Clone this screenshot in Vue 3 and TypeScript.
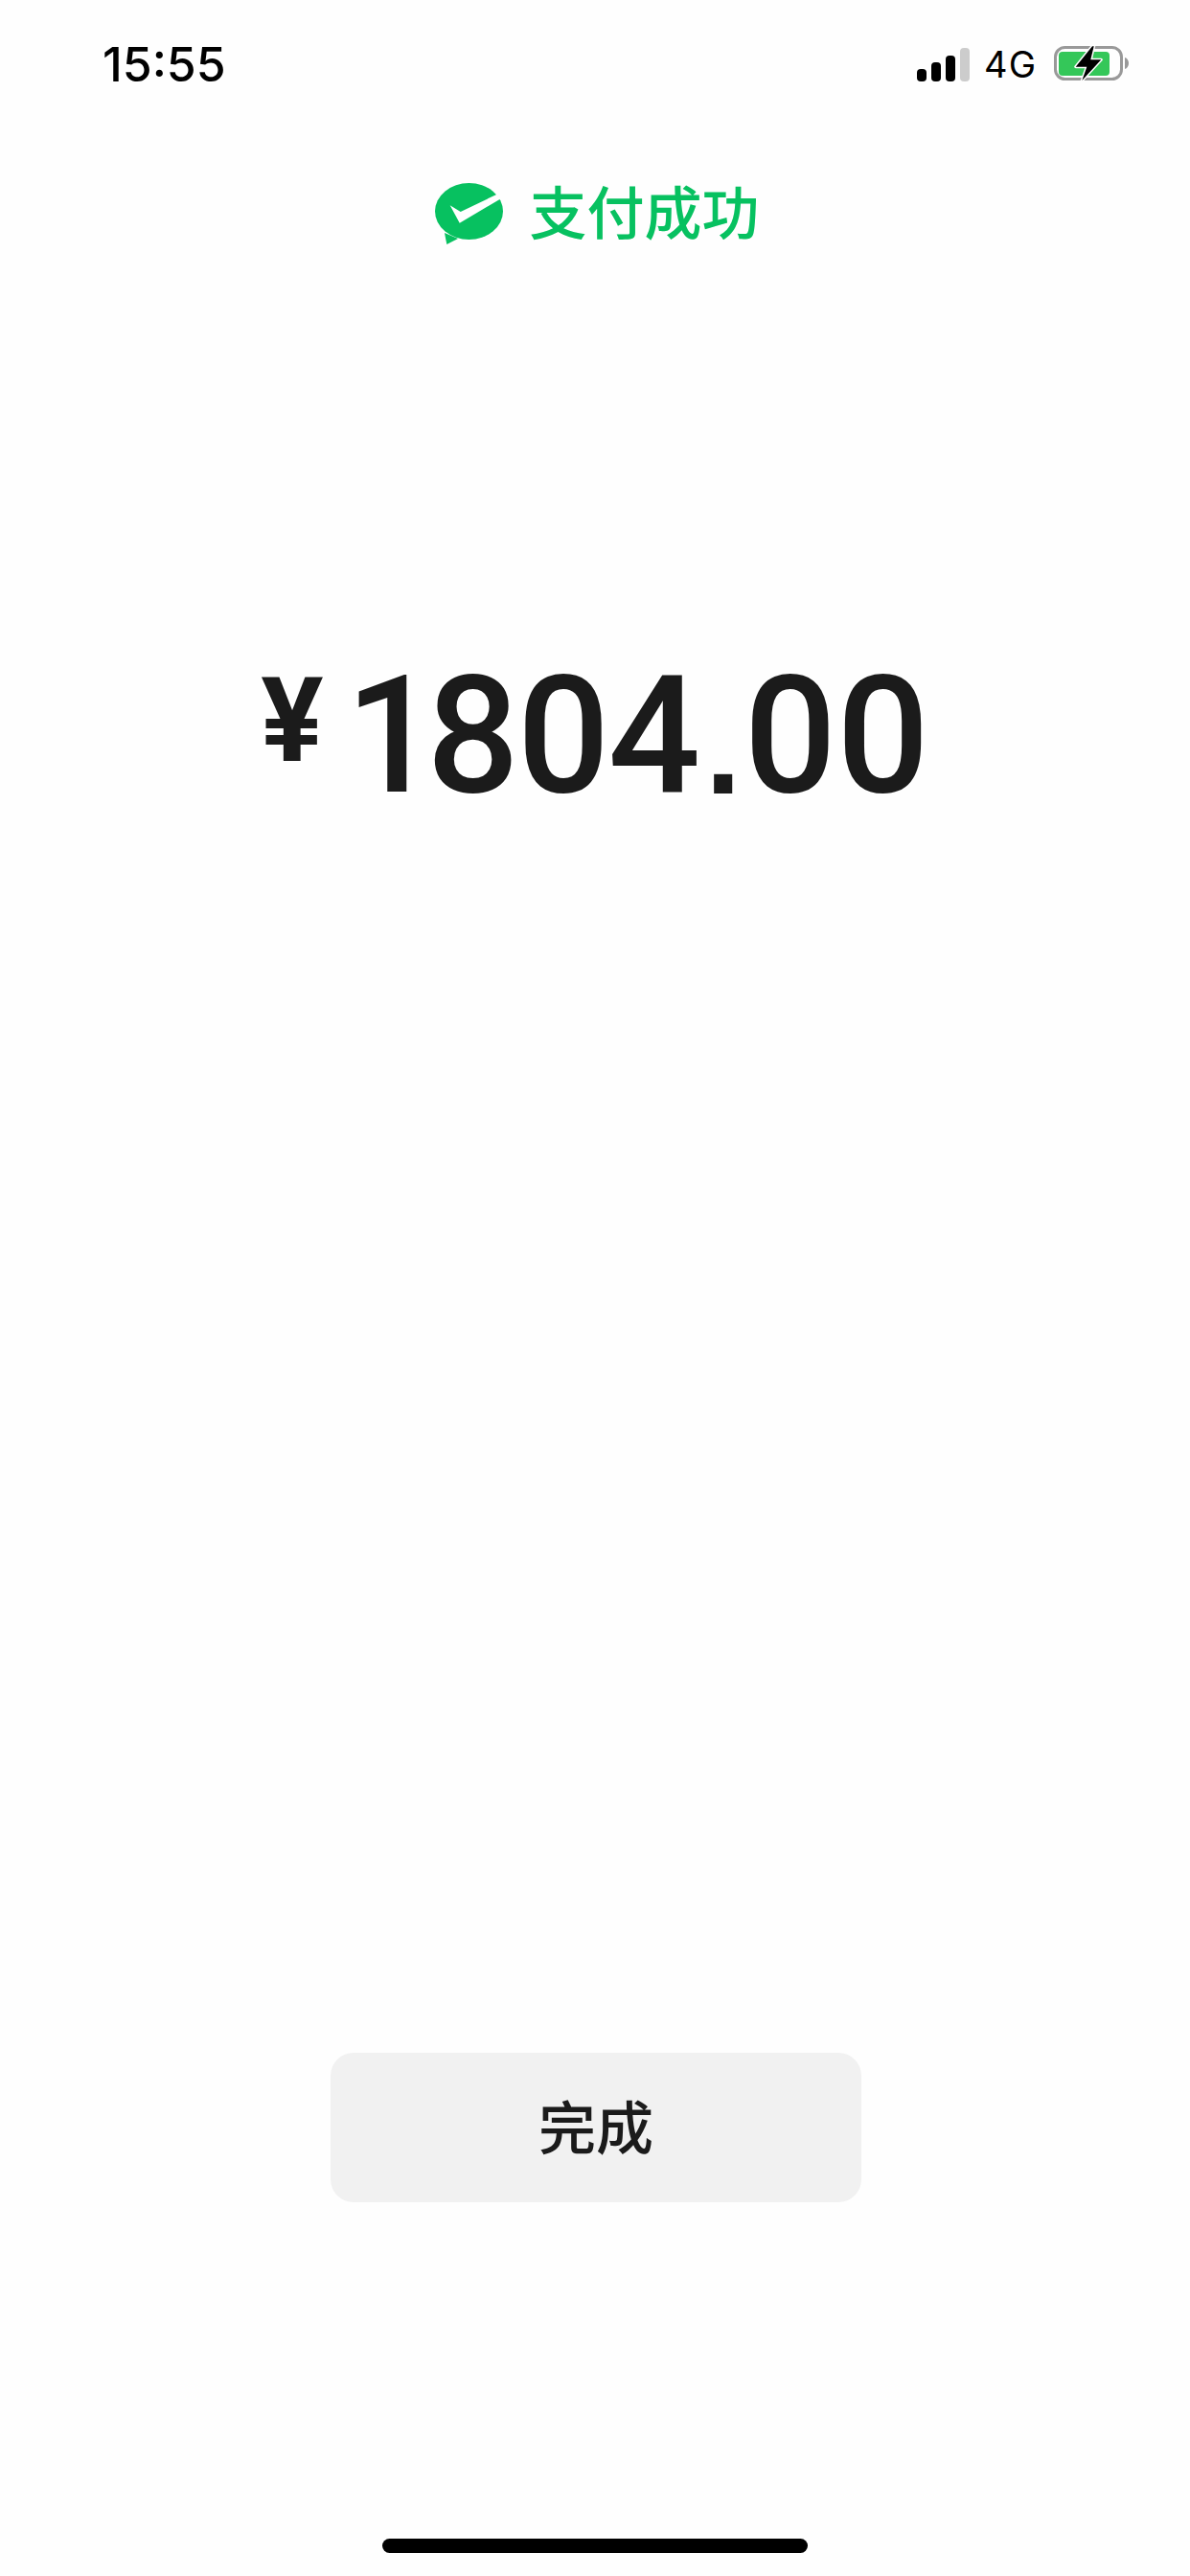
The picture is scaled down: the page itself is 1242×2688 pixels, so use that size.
<script setup lang="ts">
const lead = '1'
const whole = '804'
const cents = '00'
</script>

<template>
  <main class="page">
    <header class="status-bar">
      <span class="time">15:55</span>
      <div class="status-icons">
        <svg class="signal" width="55" height="35" viewBox="0 0 55 35">
          <rect x="0" y="22" width="10" height="13" rx="4" fill="#000" />
          <rect x="15" y="15" width="10" height="20" rx="4" fill="#000" />
          <rect x="30" y="8" width="10" height="27" rx="4" fill="#000" />
          <rect x="45" y="0" width="10" height="35" rx="4" fill="#ccc" />
        </svg>
        <span class="network">4G</span>
        <svg class="battery" width="78" height="40" viewBox="0 0 78 40">
          <rect x="1.500" y="2.500" width="69" height="33" rx="10" fill="none" stroke="#999" stroke-width="3" />
          <rect x="5" y="7" width="53" height="25" rx="4" fill="#34c759" />
          <path d="M74 13c2.500.8 4 3 4 6s-1.500 5.200-4 6z" fill="#999" />
          <path
            d="M40 1.300L22.700 22.700H34.300L29.300 37L49.300 15.300H38.300L41.700 1.300Z"
            fill="#000"
            stroke="#fff"
            stroke-width="3"
            stroke-linejoin="round"
            paint-order="stroke"
          />
        </svg>
      </div>
    </header>

    <div class="result">
      <svg class="logo" width="71" height="64" viewBox="0 0 71 64">
        <ellipse cx="35.500" cy="29.500" rx="35.500" ry="29.500" fill="#07c160" />
        <path d="M10 52L12.300 64L24 58Z" fill="#07c160" />
        <path d="M15.700 23.300L26.700 30L64.700 11.700L68 16.700L25.700 41.700Z" fill="#fff" />
      </svg>
      <span class="result-text">支付成功</span>
    </div>

    <div class="amount">
      <span class="currency">¥</span>
      <span class="value lead">{{ lead }}</span>
      <span class="value tight">{{ whole }}</span>
      <span class="dot">.</span>
      <span class="value">{{ cents }}</span>
    </div>

    <button class="done" type="button">
      <span class="done-label">完成</span>
    </button>

    <div class="home-indicator"></div>
  </main>
</template>

<style scoped>
.page {
  display: flex;
  flex-direction: column;
  align-items: center;
  width: 1242px;
  height: 2688px;
  background: #fefefe;
  font-family: "Noto Sans CJK SC", "Noto Sans", sans-serif;
  color: #1b1b1b;
  overflow: hidden;
}

.status-bar {
  display: flex;
  justify-content: space-between;
  align-items: center;
  align-self: stretch;
  height: 36px;
  margin-top: 49px;
  padding: 0 64px 0 107px;
}

.time {
  font-family: Inter, sans-serif;
  font-size: 50px;
  font-weight: 500;
  color: #000;
}

.status-icons {
  display: flex;
  align-items: center;
  gap: 18px;
}

.signal {
  margin-right: -3px;
}

.network {
  font-family: Inter, sans-serif;
  font-size: 38px;
  letter-spacing: 1px;
  color: #000;
}

.result {
  display: flex;
  align-items: center;
  gap: 28px;
  margin-top: 105px;
  padding-left: 4px;
}

.result-text {
  margin-bottom: 8px;
  font-size: 60px;
  font-weight: 500;
  line-height: 58px;
  color: #07c160;
}

.amount {
  display: flex;
  align-items: flex-start;
  margin-top: 450px;
}

.currency {
  margin-top: -15px;
  margin-right: 23px;
  font-family: Roboto, sans-serif;
  font-size: 122px;
  font-weight: 700;
  line-height: 124px;
}

.value {
  font-family: Roboto, sans-serif;
  font-size: 170px;
  font-weight: 500;
  line-height: 124px;
}

.lead {
  letter-spacing: -12px;
}

.tight {
  letter-spacing: -2px;
}

.dot {
  margin: 14px 3px 0 7px;
  font-family: "Liberation Sans", sans-serif;
  font-size: 135px;
  font-weight: 700;
  line-height: 124px;
}

.done {
  width: 554px;
  height: 156px;
  margin-top: auto;
  margin-left: 2px;
  border: none;
  border-radius: 24px;
  background: #f1f1f1;
  font-family: inherit;
  font-size: 60px;
  font-weight: 500;
  color: #1b1b1b;
}

.done-label {
  display: block;
  margin-top: -8px;
}

.home-indicator {
  width: 444px;
  height: 15px;
  margin-top: 351px;
  margin-bottom: 24px;
  border-radius: 8px;
  background: #000;
}
</style>
